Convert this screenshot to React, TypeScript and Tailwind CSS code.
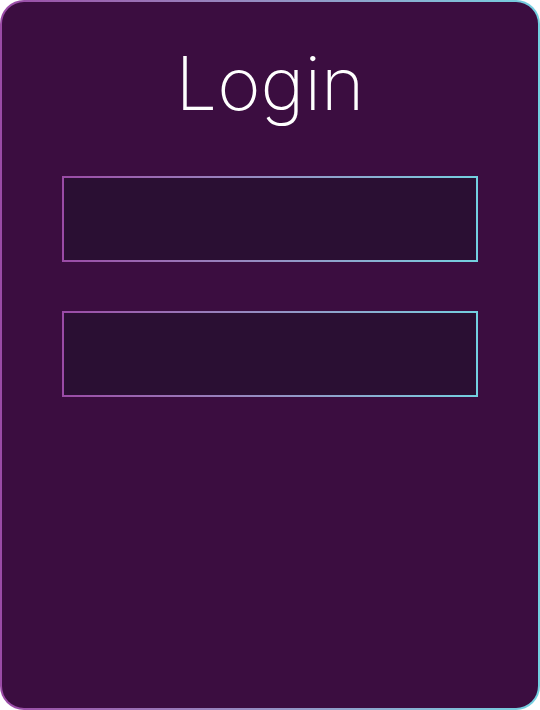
import React from "react";

function Field() {
  return (
    <div className="w-[416px] h-[86px] p-[2px] bg-gradient-to-r from-[#9a4aa6] to-[#72d0e0]">
      <input className="w-full h-full bg-[#2a0f33] outline-none border-0 text-white px-4" />
    </div>
  );
}

export default function App() {
  return (
    <div className="w-[540px] h-[710px] bg-white">
      <div className="w-full h-full rounded-[24px] p-[2px] bg-gradient-to-r from-[#9a4aa6] to-[#72d0e0]">
        <div className="w-full h-full rounded-[22px] bg-[#3b0d40] flex flex-col items-center">
          <h1
            className="text-white text-[74px] leading-none mt-[44px] font-extralight"
            style={{ fontFamily: "Inter, 'Noto Sans', sans-serif" }}
          >
            Login
          </h1>
          <div className="flex flex-col gap-[49px] mt-[56px]">
            <Field />
            <Field />
          </div>
        </div>
      </div>
    </div>
  );
}
